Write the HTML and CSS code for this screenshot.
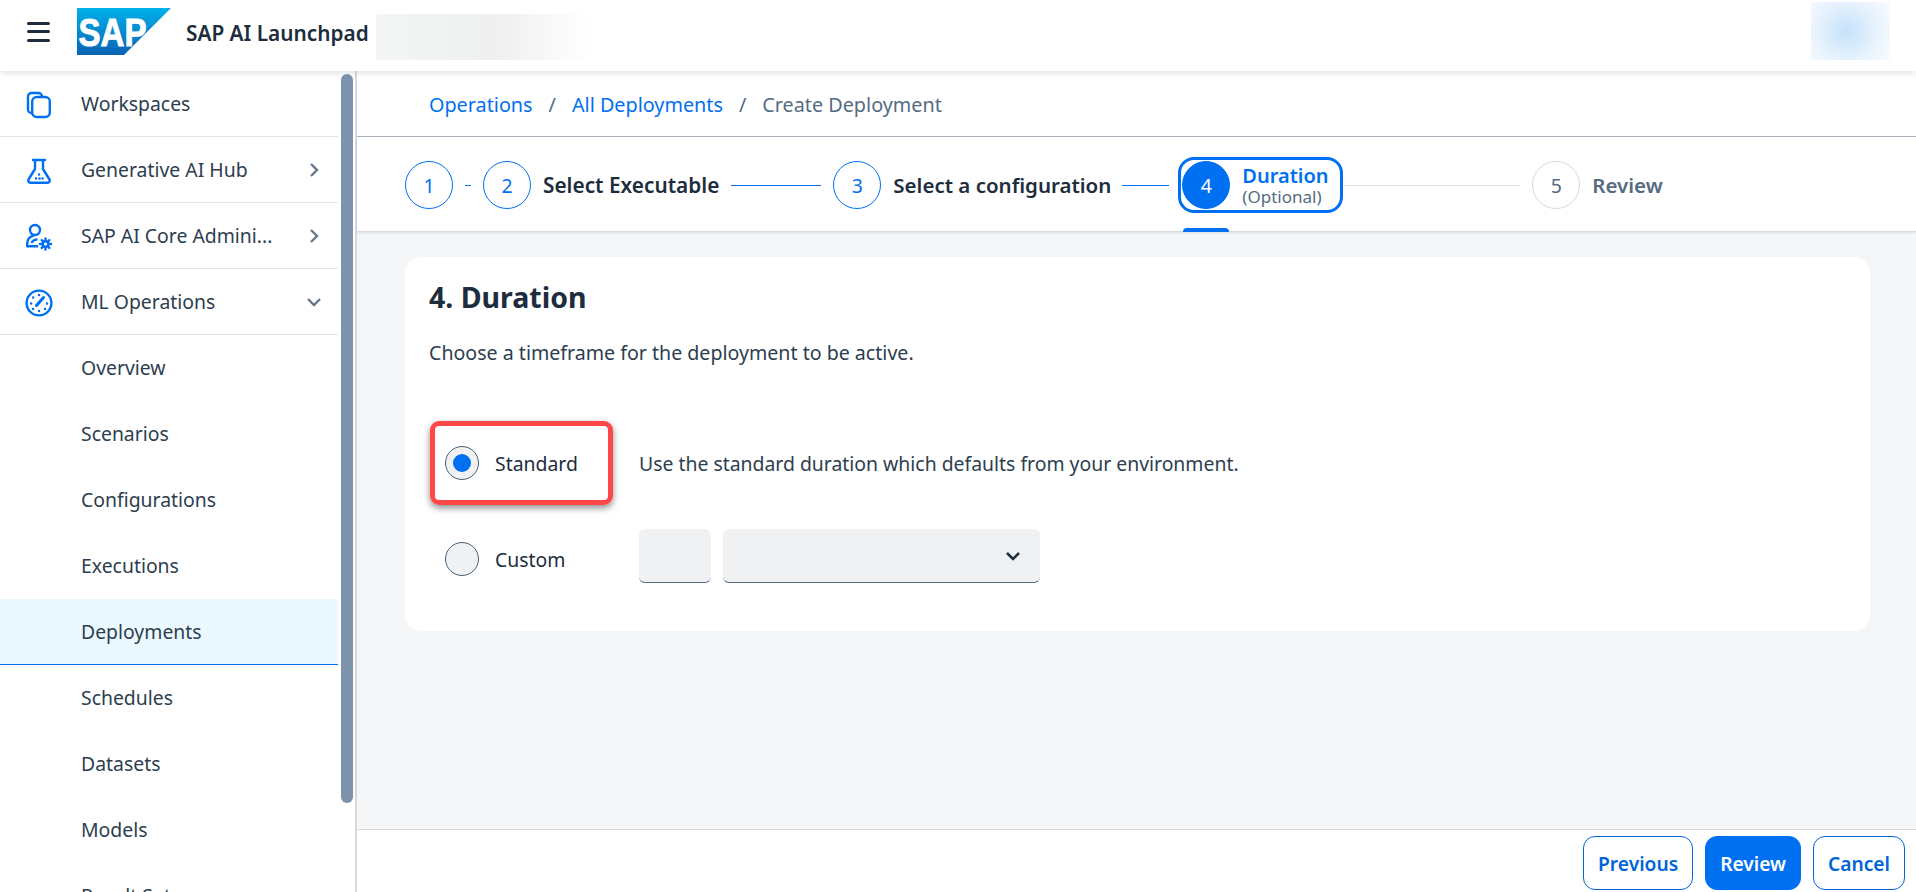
FILE: index.html
```html
<!DOCTYPE html>
<html lang="en">
<head>
    <meta charset="UTF-8">
    <meta name="viewport" content="width=device-width, initial-scale=1.0">
    <title>SAP AI Launchpad</title>
    <link rel="stylesheet" href="styles.css">
</head>
<body>

    <header class="topbar">
        <button class="menu-btn" aria-label="Menu"><span></span><span></span><span></span></button>
        <svg class="logo" viewBox="0 0 94 47" width="94" height="47">
            <defs>
                <linearGradient id="sapBlue" x1="0" y1="0" x2="0" y2="1">
                    <stop offset="0" stop-color="#00b1eb"/>
                    <stop offset="1" stop-color="#0a63b4"/>
                </linearGradient>
            </defs>
            <polygon points="0,0 94,0 47,47 0,47" fill="url(#sapBlue)"/>
            <text x="1.500" y="38" class="logo-text" textLength="68" lengthAdjust="spacingAndGlyphs">SAP</text>
        </svg>
        <span class="app-title">SAP AI Launchpad</span>
        <div class="blur-name"></div>
        <div class="blur-avatar"></div>
    </header>

    <div class="layout">
        <aside class="sidebar">
            <nav class="nav">
                <a class="nav-item top">
                    <svg class="nav-icon" viewBox="0 0 28 28"><path d="M7 22h-.5A3.500 3.500 0 0 1 3 18.500V5.500A3.500 3.500 0 0 1 6.500 2h7A3.500 3.500 0 0 1 17 5.500"/><rect x="7.200" y="6" width="17.600" height="20" rx="4.500"/></svg>
                    <span class="nav-label">Workspaces</span>
                </a>
                <a class="nav-item top">
                    <svg class="nav-icon" viewBox="0 0 28 28"><path d="M8 3h12M10 3v9L3.500 22.500a2.200 2.200 0 0 0 2 3.300h17a2.200 2.200 0 0 0 2-3.300L18 12V3"/><path d="M11 21.500h.1M14 17.500h.1M14.500 21.500h.1M17.500 21.500h.1" class="dots"/></svg>
                    <span class="nav-label">Generative AI Hub</span>
                    <svg class="chev" viewBox="0 0 12 16"><path d="M3 2l6 6-6 6"/></svg>
                </a>
                <a class="nav-item top">
                    <svg class="nav-icon" viewBox="0 0 28 28"><circle cx="10" cy="7" r="5"/><path d="M2.200 23.200v-2.500c0-4 2.500-7 6.300-8M2.200 23.200h10M7 19c1-1.500 2.500-2.300 4.500-2.500"/><circle cx="20.500" cy="21" r="2.800"/><path d="M20.500 15.500v1.500M20.500 25v1.500M15 21h1.500M24.500 21h1.500M16.700 17.200l1 1M23.300 23.800l1 1M24.300 17.200l-1 1M17.700 23.800l-1 1"/></svg>
                    <span class="nav-label">SAP AI Core Admini...</span>
                    <svg class="chev" viewBox="0 0 12 16"><path d="M3 2l6 6-6 6"/></svg>
                </a>
                <a class="nav-item top">
                    <svg class="nav-icon" viewBox="0 0 28 28"><circle cx="14" cy="14" r="12.400"/><path d="M11.500 16.500L18.500 8.500" class="needle"/><path d="M14 6h.1M8 8.500h.1M6 14.500h.1M22 14.500h.1M8 20h.1M14 22h.1M20 20h.1" class="dots"/></svg>
                    <span class="nav-label">ML Operations</span>
                    <svg class="chev down" viewBox="0 0 16 12"><path d="M2 3l6 6 6-6"/></svg>
                </a>
                <a class="nav-item sub"><span class="nav-label">Overview</span></a>
                <a class="nav-item sub"><span class="nav-label">Scenarios</span></a>
                <a class="nav-item sub"><span class="nav-label">Configurations</span></a>
                <a class="nav-item sub"><span class="nav-label">Executions</span></a>
                <a class="nav-item sub selected"><span class="nav-label">Deployments</span></a>
                <a class="nav-item sub"><span class="nav-label">Schedules</span></a>
                <a class="nav-item sub"><span class="nav-label">Datasets</span></a>
                <a class="nav-item sub"><span class="nav-label">Models</span></a>
                <a class="nav-item sub"><span class="nav-label">Result Sets</span></a>
            </nav>
            <div class="scrollbar"></div>
        </aside>

        <main class="content">
            <div class="breadcrumb">
                <a>Operations</a>
                <span class="sep">/</span>
                <a>All Deployments</a>
                <span class="sep">/</span>
                <span class="current">Create Deployment</span>
            </div>

            <div class="stepper">
                <span class="circle">1</span>
                <span class="line line-short"></span>
                <span class="circle">2</span>
                <span class="step-label step-wide">Select Executable</span>
                <span class="line line-mid"></span>
                <span class="circle">3</span>
                <span class="step-label">Select a configuration</span>
                <span class="line line-small"></span>
                <div class="step-active">
                    <span class="circle filled">4</span>
                    <div class="step-text">
                        <span class="step-name">Duration</span>
                        <span class="step-opt">(Optional)</span>
                    </div>
                    <span class="tab-mark"></span>
                </div>
                <span class="line line-todo"></span>
                <span class="circle todo">5</span>
                <span class="step-label todo-label">Review</span>
            </div>

            <section class="page-body">
                <div class="card">
                    <h2>4. Duration</h2>
                    <p class="intro">Choose a timeframe for the deployment to be active.</p>
                    <div class="options">
                        <label class="option">
                            <span class="radio checked"></span>
                            <span>Standard</span>
                            <span class="callout"></span>
                        </label>
                        <div class="option-desc">Use the standard duration which defaults from your environment.</div>
                        <label class="option custom">
                            <span class="radio"></span>
                            <span>Custom</span>
                        </label>
                        <div class="custom-fields">
                            <div class="field field-num"></div>
                            <div class="field field-select">
                                <svg class="select-chev" viewBox="0 0 16 12"><path d="M2 3l6 6 6-6"/></svg>
                            </div>
                        </div>
                    </div>
                </div>
            </section>

            <footer class="actions">
                <button class="btn">Previous</button>
                <button class="btn primary">Review</button>
                <button class="btn">Cancel</button>
            </footer>
        </main>
    </div>

</body>
</html>
```

FILE: styles.css
```css
* {
    box-sizing: border-box;
}
html, body {
    height: 100%;
}
body {
    margin: 0;
    font-family: "Noto Sans", Arial, sans-serif;
    font-size: 19.400px;
    color: #1d2d3e;
    background-color: #ffffff;
    overflow: hidden;
    display: flex;
    flex-direction: column;
}

/* top bar */
.topbar {
    height: 71px;
    flex: none;
    display: flex;
    align-items: center;
    background-color: #ffffff;
    box-shadow: 0 2px 6px rgba(85, 107, 130, 0.2);
    position: relative;
    z-index: 2;
}
.menu-btn {
    width: 23px;
    height: 20px;
    margin: 0 27px 8px 27px;
    padding: 0;
    border: none;
    background: none;
    display: flex;
    flex-direction: column;
    justify-content: space-between;
}
.menu-btn span {
    display: block;
    height: 3px;
    border-radius: 2px;
    background-color: #1d2d3e;
}
.logo {
    flex: none;
    margin-bottom: 8px;
}
.logo-text {
    font-family: "Liberation Sans", Arial, sans-serif;
    font-weight: bold;
    font-size: 39px;
    fill: #ffffff;
    stroke: #ffffff;
    stroke-width: 1;
}
.app-title {
    margin: 0 7px 0 15px;
    font-size: 20.800px;
    font-weight: 600;
    padding-bottom: 6px;
    white-space: nowrap;
}
.blur-name {
    width: 215px;
    height: 46px;
    margin-top: 3px;
    background: linear-gradient(90deg, #f4f5f5 0%, #eeeff0 55%, #ffffff 100%);
}
.blur-avatar {
    width: 79px;
    height: 58px;
    margin: 0 26px 9px auto;
    background: radial-gradient(circle at 45% 50%, #c5e2fa 0%, #e6f2fd 55%, #fafcff 100%);
}

/* side navigation */
.layout {
    flex: 1;
    display: flex;
    min-height: 0;
}
.sidebar {
    width: 357px;
    flex: none;
    display: flex;
    border-right: 2px solid #d9d9d9;
    overflow: hidden;
}
.nav {
    width: 338px;
    flex: none;
}
.nav-item {
    height: 66px;
    display: flex;
    align-items: center;
    padding-left: 81px;
    position: relative;
}
.nav-item.top {
    border-bottom: 1px solid #e5e5e5;
}
.nav-item.sub {
    padding-bottom: 1px;
}
.nav-item.selected {
    padding-bottom: 0;
    background-color: #ebf8ff;
    border-bottom: 1px solid #0070f2;
}
.nav-label {
    font-size: 19.400px;
    color: #2d3e50;
    white-space: nowrap;
}
.nav-icon {
    position: absolute;
    left: 25px;
    top: 20px;
    width: 28px;
    height: 28px;
    fill: none;
    stroke: #0070f2;
    stroke-width: 2.400;
    stroke-linecap: round;
    stroke-linejoin: round;
}
.nav-icon .needle {
    stroke-width: 3;
}
.chev {
    position: absolute;
    left: 308px;
    top: 25px;
    width: 12px;
    height: 16px;
    fill: none;
    stroke: #64778c;
    stroke-width: 2.400;
}
.chev.down {
    left: 306px;
    top: 27px;
    width: 16px;
    height: 12px;
}
.scrollbar {
    width: 12px;
    height: 729px;
    margin: 3px 0 0 3px;
    border-radius: 6px;
    background-color: #7d93ab;
    flex: none;
}

/* main area */
.content {
    flex: 1;
    min-width: 0;
    display: flex;
    flex-direction: column;
}
.breadcrumb {
    height: 66px;
    flex: none;
    display: flex;
    align-items: center;
    gap: 16px;
    padding: 2px 0 0 72px;
    border-bottom: 1px solid #a9b4be;
    font-size: 19.800px;
}
.breadcrumb a {
    color: #0070f2;
}
.breadcrumb .sep,
.breadcrumb .current {
    color: #556b82;
}

.stepper {
    height: 95px;
    flex: none;
    display: flex;
    align-items: center;
    padding: 2px 0 0 48px;
    border-bottom: 1px solid #d9d9d9;
    box-shadow: 0 1px 2px rgba(0, 0, 0, 0.1);
    position: relative;
    z-index: 1;
    font-size: 20.500px;
    font-weight: 600;
}
.circle {
    width: 48px;
    height: 48px;
    flex: none;
    display: flex;
    align-items: center;
    justify-content: center;
    border: 1px solid #0070f2;
    border-radius: 50%;
    color: #0070f2;
    font-size: 19.400px;
    font-weight: 400;
}
.circle.filled {
    background-color: #0070f2;
    color: #ffffff;
}
.circle.todo {
    border-color: #d9d9d9;
    color: #556b82;
}
.line {
    height: 1px;
    flex: none;
    background-color: #0070f2;
}
.line-short {
    width: 6px;
    margin: 0 12px;
}
.line-mid {
    width: 90px;
    margin: 0 12px;
}
.line-small {
    width: 47px;
    margin: 0 9px 0 11px;
}
.line-todo {
    width: 177px;
    margin-right: 12px;
    background-color: #e5e5e5;
}
.step-label {
    margin-left: 12px;
    white-space: nowrap;
}
.step-wide {
    font-size: 20.800px;
}
.todo-label {
    color: #556b82;
}
.step-active {
    width: 165px;
    height: 56px;
    flex: none;
    display: flex;
    align-items: center;
    gap: 12px;
    padding-left: 1px;
    border: 3px solid #0070f2;
    border-radius: 16px;
    position: relative;
}
.step-text {
    display: flex;
    flex-direction: column;
    line-height: 21px;
    padding-top: 2px;
}
.step-name {
    color: #0070f2;
    font-size: 20px;
}
.step-opt {
    font-size: 17px;
    font-weight: 400;
    color: #556b82;
}
.tab-mark {
    position: absolute;
    left: 2px;
    top: 68px;
    width: 46px;
    height: 4px;
    border-radius: 4px 4px 0 0;
    background-color: #0070f2;
}

.page-body {
    flex: 1;
    min-height: 0;
    padding: 25px 46px 0 48px;
    background-color: #f5f6f7;
}
.card {
    height: 374px;
    padding: 20px 24px 0;
    border-radius: 16px;
    background-color: #ffffff;
}
.card h2 {
    margin: 0;
    font-size: 28.500px;
    font-weight: 700;
    line-height: 40px;
}
.intro {
    margin: 24px 0 0;
    line-height: 24px;
    font-size: 19.600px;
    color: #2d3e50;
}
.options {
    margin-top: 68px;
    margin-left: 16px;
    display: grid;
    grid-template-columns: 194px 1fr;
    grid-template-rows: 60px 54px;
    row-gap: 36px;
    align-items: center;
}
.option {
    display: flex;
    align-items: center;
    gap: 16px;
    position: relative;
}
.option.custom {
    padding-top: 6px;
}
.radio {
    width: 34px;
    height: 34px;
    flex: none;
    display: flex;
    align-items: center;
    justify-content: center;
    border: 1px solid #475e75;
    border-radius: 50%;
    background-color: #eff1f2;
}
.radio.checked::after {
    content: "";
    width: 18px;
    height: 18px;
    border-radius: 50%;
    background-color: #0070f2;
}
.callout {
    position: absolute;
    left: -15px;
    top: -25px;
    width: 183px;
    height: 84px;
    border: 5px solid #ff4747;
    border-radius: 9px;
    box-shadow: 0 3px 7px rgba(0, 0, 0, 0.45);
}
.option-desc {
    color: #2d3e50;
}
.custom-fields {
    display: flex;
    gap: 12px;
}
.field {
    height: 54px;
    border-bottom: 1px solid #556b82;
    border-radius: 6px;
    background-color: #eff1f2;
}
.field-num {
    width: 72px;
}
.field-select {
    width: 317px;
    position: relative;
}
.select-chev {
    position: absolute;
    right: 19px;
    top: 21px;
    width: 16px;
    height: 12px;
    fill: none;
    stroke: #1d2d3e;
    stroke-width: 2.500;
}

.actions {
    height: 63px;
    flex: none;
    display: flex;
    justify-content: flex-end;
    gap: 12px;
    padding: 6px 11px 0 0;
    border-top: 1px solid #d9d9d9;
}
.btn {
    height: 54px;
    padding: 0 14px;
    border: 1px solid #0064d9;
    border-radius: 12px;
    background-color: #ffffff;
    color: #0064d9;
    font-family: inherit;
    font-size: 19.200px;
    font-weight: 600;
}
.btn.primary {
    background-color: #0070f2;
    border-color: #0070f2;
    color: #ffffff;
}
```
